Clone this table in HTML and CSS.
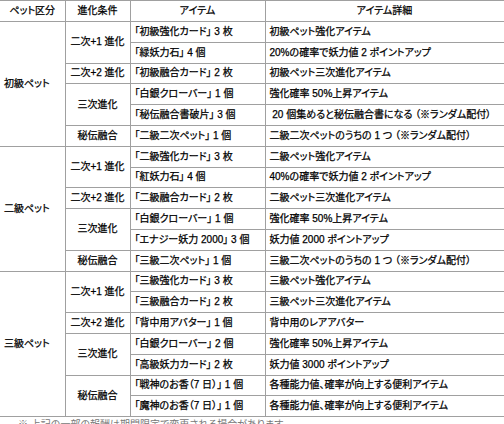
FILE: index.html
```html
<!DOCTYPE html>
<html lang="ja">
<head>
<meta charset="utf-8">
<link rel="stylesheet" href="styles.css">
</head>
<body>
<table class="pet-table">
  <colgroup>
    <col class="c1"><col class="c2"><col class="c3"><col class="c4">
  </colgroup>
  <thead>
    <tr class="head">
      <th>ペット区分</th><th>進化条件</th><th>アイテム</th><th>アイテム詳細</th>
    </tr>
  </thead>
  <tbody>
    <tr>
      <td class="pet" rowspan="6">初級ペット</td>
      <td class="cond" rowspan="2">二次+1 進化</td>
      <td class="item">「初級強化カード」 3 枚</td>
      <td class="detail">初級ペット強化アイテム</td>
    </tr>
    <tr>
      <td class="item">「緑妖力石」 4 個</td>
      <td class="detail">20%の確率で妖力値 2 ポイントアップ</td>
    </tr>
    <tr>
      <td class="cond">二次+2 進化</td>
      <td class="item">「初級融合カード」 2 枚</td>
      <td class="detail">初級ペット三次進化アイテム</td>
    </tr>
    <tr>
      <td class="cond" rowspan="2">三次進化</td>
      <td class="item">「白銀クローバー」 1 個</td>
      <td class="detail">強化確率 50%上昇アイテム</td>
    </tr>
    <tr>
      <td class="item">「秘伝融合書破片」 3 個</td>
      <td class="detail">&nbsp;20 個集めると秘伝融合書になる （※ランダム配付）</td>
    </tr>
    <tr>
      <td class="cond">秘伝融合</td>
      <td class="item">「二級二次ペット」 1 個</td>
      <td class="detail">二級二次ペットのうちの 1 つ （※ランダム配付）</td>
    </tr>

    <tr>
      <td class="pet" rowspan="6">二級ペット</td>
      <td class="cond" rowspan="2">二次+1 進化</td>
      <td class="item">「二級強化カード」 3 枚</td>
      <td class="detail">二級ペット強化アイテム</td>
    </tr>
    <tr>
      <td class="item">「紅妖力石」 4 個</td>
      <td class="detail">40%の確率で妖力値 2 ポイントアップ</td>
    </tr>
    <tr>
      <td class="cond">二次+2 進化</td>
      <td class="item">「二級融合カード」 2 枚</td>
      <td class="detail">二級ペット三次進化アイテム</td>
    </tr>
    <tr>
      <td class="cond" rowspan="2">三次進化</td>
      <td class="item">「白銀クローバー」 1 個</td>
      <td class="detail">強化確率 50%上昇アイテム</td>
    </tr>
    <tr>
      <td class="item">「エナジー妖力 2000」 3 個</td>
      <td class="detail">妖力値 2000 ポイントアップ</td>
    </tr>
    <tr>
      <td class="cond">秘伝融合</td>
      <td class="item">「三級二次ペット」 1 個</td>
      <td class="detail">三級二次ペットのうちの 1 つ （※ランダム配付）</td>
    </tr>

    <tr>
      <td class="pet" rowspan="7">三級ペット</td>
      <td class="cond" rowspan="2">二次+1 進化</td>
      <td class="item">「三級強化カード」 3 枚</td>
      <td class="detail">三級ペット強化アイテム</td>
    </tr>
    <tr>
      <td class="item">「三級融合カード」 2 枚</td>
      <td class="detail">三級ペット三次進化アイテム</td>
    </tr>
    <tr>
      <td class="cond">二次+2 進化</td>
      <td class="item">「背中用アバター」 1 個</td>
      <td class="detail">背中用のレアアバター</td>
    </tr>
    <tr>
      <td class="cond" rowspan="2">三次進化</td>
      <td class="item">「白銀クローバー」 2 個</td>
      <td class="detail">強化確率 50%上昇アイテム</td>
    </tr>
    <tr>
      <td class="item">「高級妖力カード」 2 枚</td>
      <td class="detail">妖力値 3000 ポイントアップ</td>
    </tr>
    <tr>
      <td class="cond" rowspan="2">秘伝融合</td>
      <td class="item">「戦神のお香（7 日）」 1 個</td>
      <td class="detail">各種能力値、確率が向上する便利アイテム</td>
    </tr>
    <tr>
      <td class="item">「魔神のお香（7 日）」 1 個</td>
      <td class="detail">各種能力値、確率が向上する便利アイテム</td>
    </tr>
  </tbody>
</table>
<p class="note">※ 上記の一部の報酬は期間限定で変更される場合があります。</p>
</body>
</html>
```

FILE: styles.css
```css
html, body {
  margin: 0;
  padding: 0;
  background: #ffffff;
}

body {
  font-family: "Liberation Sans", "Noto Sans CJK JP", sans-serif;
  font-size: 10px;
  color: #000000;
  font-feature-settings: "palt";
  overflow: hidden;
  height: 424px;
}

.pet-table {
  border-collapse: collapse;
  width: 504px;
  table-layout: fixed;
}

.c1 { width: 65px; }
.c2 { width: 65px; }
.c3 { width: 135px; }
.c4 { width: 239px; }

.pet-table th,
.pet-table td {
  border: 1px solid #a0a0a0;
  padding: 0 4px;
  white-space: nowrap;
  line-height: 12px;
  font-weight: normal;
  -webkit-text-stroke: 0.25px #000000;
  vertical-align: middle;
}

.pet-table tr.head {
  height: 21px;
}

.pet-table tbody tr {
  height: 20.8px;
}

.pet-table th {
  text-align: center;
}

.pet {
  text-align: left;
  padding-left: 6px;
}

.cond {
  text-align: center;
}

.item {
  text-align: left;
  padding-left: 3px;
}

.detail {
  text-align: left;
  padding-left: 6px;
}

.pet-table td:first-child,
.pet-table th:first-child {
  border-left: none;
}

.note {
  margin: 2px 0 0 18px;
  font-size: 10px;
  line-height: 12px;
  color: #777777;
}
```
